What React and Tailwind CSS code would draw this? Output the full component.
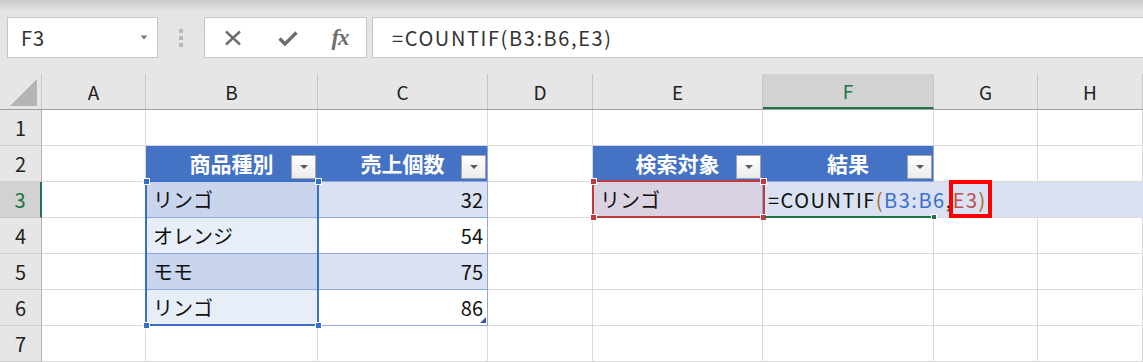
import React from 'react';

const cols = [
  { id: 'A', w: 'w-[104px]' },
  { id: 'B', w: 'w-[172px]' },
  { id: 'C', w: 'w-[170px]' },
  { id: 'D', w: 'w-[105px]' },
  { id: 'E', w: 'w-[170px]' },
  { id: 'F', w: 'w-[171px]' },
  { id: 'G', w: 'w-[104px]' },
  { id: 'H', w: 'w-[105px]' },
];

const GRID = 'border-r border-b border-[#d9d9d9]';
const TBL = 'border-r border-b border-[#8ea9db]';

function Cell({ w, bd = GRID, className = '', children }) {
  return (
    <div className={`${w} ${bd} h-full shrink-0 flex items-center ${className}`}>
      {children}
    </div>
  );
}

function RowHead({ n, active }) {
  return active ? (
    <div className="w-[42px] h-full shrink-0 flex items-center justify-center bg-[#d2d2d2] border-b border-b-[#c6c6c6] border-r-2 border-r-[#217346] text-[#217346]">
      {n}
    </div>
  ) : (
    <div className="w-[42px] h-full shrink-0 flex items-center justify-center bg-[#e6e6e6] border-b border-b-[#cfcfcf] border-r border-r-[#b3b3b3] text-[#222]">
      {n}
    </div>
  );
}

function Dropdown() {
  return (
    <div className="absolute right-[1px] bottom-[2px] w-[25px] h-[24px] border border-[#a3a3a3] bg-linear-to-b from-white to-[#ececec] flex items-center justify-center">
      <svg width="10" height="6" viewBox="0 0 10 6">
        <path d="M1 1h8L5 5z" fill="#5a5a5a" />
      </svg>
    </div>
  );
}

function TableHead({ w, bd, children }) {
  return (
    <Cell w={w} bd={bd} className="relative justify-center bg-[#4472c4] text-white font-bold text-[21px]">
      {children}
      <Dropdown />
    </Cell>
  );
}

function Handle({ className }) {
  return <div className={`absolute w-[7px] h-[7px] border border-white ${className}`} />;
}

export default function App() {
  const [A, B, C, D, E, F, G, H] = cols.map((c) => c.w);

  return (
    <div className="w-[1143px] h-[362px] overflow-hidden bg-[#e6e6e6] text-[20px] leading-none font-['Noto_Sans_CJK_JP','Noto_Sans',sans-serif] text-[#111]">
      {/* toolbar */}
      <div className="h-[74px] flex items-start pt-[17px] pl-[7px] overflow-hidden bg-[linear-gradient(#c9c9c9,#e4e4e4_12px,#e6e6e6)]">
        <div className="w-[151px] h-[41px] shrink-0 bg-white border border-[#c6c6c6] flex items-center justify-between pl-[13px] pr-[9px] text-[#333]">
          <span className="tracking-[1px]">F3</span>
          <svg width="8" height="5" viewBox="0 0 8 5">
            <path d="M0.5 0.5h7L4 4.5z" fill="#7a7a7a" />
          </svg>
        </div>
        <div className="w-[46px] h-[41px] shrink-0 flex flex-col items-center justify-center gap-[3px]">
          <div className="w-[4px] h-[4px] bg-[#b8b8b8]" />
          <div className="w-[4px] h-[4px] bg-[#b8b8b8]" />
          <div className="w-[4px] h-[4px] bg-[#b8b8b8]" />
        </div>
        <div className="w-[163px] h-[41px] shrink-0 bg-white border border-[#c6c6c6] flex items-center">
          <div className="w-[56px] flex justify-center">
            <svg width="18" height="16" viewBox="0 0 18 16">
              <path d="M2 1.5l14 13M16 1.5l-14 13" stroke="#6e6e6e" strokeWidth="2.4" />
            </svg>
          </div>
          <div className="w-[53px] flex justify-center">
            <svg width="20" height="16" viewBox="0 0 20 16">
              <path d="M1.5 8.5l5.5 5.5L18.5 2.5" stroke="#6e6e6e" strokeWidth="3.4" fill="none" />
            </svg>
          </div>
          <div className="w-[52px] flex justify-center">
            <span className="font-['Liberation_Serif',serif] italic font-bold text-[23px] text-[#6e6e6e] tracking-[-1px]">fx</span>
          </div>
        </div>
        <div className="ml-[5px] w-[800px] h-[41px] shrink-0 bg-white border border-[#c6c6c6] flex items-center pl-[19px] text-[#333] whitespace-nowrap tracking-[1.6px]">
          =COUNTIF(B3:B6,E3)
        </div>
      </div>

      {/* grid */}
      <div className="relative">
        {/* column headers */}
        <div className="flex h-[36px] border-b border-[#9f9f9f] bg-[#e6e6e6] text-[19px] text-[#222]">
          <div className="w-[42px] h-full shrink-0 border-r border-[#c6c6c6] flex items-end justify-end pr-[3px] pb-[3px]">
            <svg width="28" height="28" viewBox="0 0 28 28">
              <path d="M27 1v27H0z" fill="#b4b4b4" />
            </svg>
          </div>
          {cols.map((c) =>
            c.id === 'F' ? (
              <div key={c.id} className={`${c.w} h-full shrink-0 border-r border-r-[#c6c6c6] border-b-2 border-b-[#217346] bg-[#d2d2d2] flex items-center justify-center text-[#217346]`}>
                {c.id}
              </div>
            ) : (
              <div key={c.id} className={`${c.w} h-full shrink-0 border-r border-[#c6c6c6] flex items-center justify-center`}>
                {c.id}
              </div>
            )
          )}
        </div>

        {/* row 1 */}
        <div className="flex h-[36px] bg-white">
          <RowHead n="1" />
          <Cell w={A} /><Cell w={B} /><Cell w={C} /><Cell w={D} />
          <Cell w={E} /><Cell w={F} /><Cell w={G} /><Cell w={H} />
        </div>

        {/* row 2 */}
        <div className="flex h-[36px] bg-white">
          <RowHead n="2" />
          <Cell w={A} />
          <TableHead w={B} bd="border-r border-b border-r-[#4472c4] border-b-[#8ea9db]">商品種別</TableHead>
          <TableHead w={C} bd="border-r border-b border-[#8ea9db]">売上個数</TableHead>
          <Cell w={D} />
          <TableHead w={E} bd="border-r border-b border-r-[#4472c4] border-b-[#8ea9db]">検索対象</TableHead>
          <TableHead w={F} bd="border-r border-b border-[#8ea9db]">結果</TableHead>
          <Cell w={G} /><Cell w={H} />
        </div>

        {/* row 3 */}
        <div className="flex h-[36px] bg-white">
          <RowHead n="3" active />
          <Cell w={A} />
          <Cell w={B} bd={TBL} className="bg-[#c9d5ec] pl-[7px]">リンゴ</Cell>
          <Cell w={C} bd={TBL} className="bg-[#d9e1f2] justify-end pr-[4px]">32</Cell>
          <Cell w={D} />
          <Cell w={E} bd={TBL} className="bg-[#dad2e0] pl-[7px]">リンゴ</Cell>
          <Cell w={F} bd="border-b border-[#d9d9d9]" className="relative z-10 bg-[#d9e1f2] items-stretch">
            <div className="flex items-stretch pl-[5px] whitespace-nowrap tracking-[1.5px]">
              <span className="flex items-center">=COUNTIF</span>
              <span className="flex items-center text-[#a86a2a]">(</span>
              <span className="flex items-center text-[#3b6fd0]">B3:B6</span>
              <span className="flex items-center">,</span>
              <span className="relative flex items-center">
                <span className="text-[#c0504d]">E3</span>
                <span className="text-[#a86a2a]">)</span>
                <span className="absolute -left-[4px] -right-[5px] -top-[2px] -bottom-[1px] border-4 border-[#ff0000]" />
              </span>
            </div>
          </Cell>
          <Cell w={G} bd="border-b border-[#d9d9d9]" className="bg-[#d9e1f2]" />
          <Cell w={H} bd="border-b border-[#d9d9d9]" className="bg-[#d9e1f2]" />
        </div>

        {/* row 4 */}
        <div className="flex h-[36px] bg-white">
          <RowHead n="4" />
          <Cell w={A} />
          <Cell w={B} bd={TBL} className="bg-[#e8eef8] pl-[7px]">オレンジ</Cell>
          <Cell w={C} bd={TBL} className="justify-end pr-[4px]">54</Cell>
          <Cell w={D} /><Cell w={E} /><Cell w={F} /><Cell w={G} /><Cell w={H} />
        </div>

        {/* row 5 */}
        <div className="flex h-[36px] bg-white">
          <RowHead n="5" />
          <Cell w={A} />
          <Cell w={B} bd={TBL} className="bg-[#c9d5ec] pl-[7px]">モモ</Cell>
          <Cell w={C} bd={TBL} className="bg-[#d9e1f2] justify-end pr-[4px]">75</Cell>
          <Cell w={D} /><Cell w={E} /><Cell w={F} /><Cell w={G} /><Cell w={H} />
        </div>

        {/* row 6 */}
        <div className="flex h-[36px] bg-white">
          <RowHead n="6" />
          <Cell w={A} />
          <Cell w={B} bd={TBL} className="bg-[#e8eef8] pl-[7px]">リンゴ</Cell>
          <Cell w={C} bd={TBL} className="relative justify-end pr-[4px]">
            86
            <svg className="absolute right-[1px] bottom-[2px]" width="6" height="6" viewBox="0 0 6 6">
              <path d="M6 0v6H0z" fill="#3f51b5" />
            </svg>
          </Cell>
          <Cell w={D} /><Cell w={E} /><Cell w={F} /><Cell w={G} /><Cell w={H} />
        </div>

        {/* row 7 */}
        <div className="flex h-[36px] bg-white">
          <RowHead n="7" />
          <Cell w={A} /><Cell w={B} /><Cell w={C} /><Cell w={D} />
          <Cell w={E} /><Cell w={F} /><Cell w={G} /><Cell w={H} />
        </div>

        {/* selection B3:B6 */}
        <div className="absolute left-[145px] top-[106px] w-[174px] h-[146px] border-2 border-[#3a6fc8] z-20" />
        <Handle className="left-[143px] top-[104px] bg-[#3a6fc8] z-20" />
        <Handle className="left-[315px] top-[104px] bg-[#3a6fc8] z-20" />
        <Handle className="left-[143px] top-[248px] bg-[#3a6fc8] z-20" />
        <Handle className="left-[315px] top-[248px] bg-[#3a6fc8] z-20" />

        {/* E3 reference */}
        <div className="absolute left-[592px] top-[106px] w-[173px] h-[38px] border-2 border-[#c0393b] z-20" />
        <Handle className="left-[590px] top-[104px] bg-[#c0393b] z-20" />
        <Handle className="left-[760px] top-[104px] bg-[#c0393b] z-20" />
        <Handle className="left-[590px] top-[140px] bg-[#c0393b] z-20" />
        <Handle className="left-[760px] top-[140px] bg-[#c0393b] z-20" />

        {/* active cell F3 */}
        <div className="absolute left-[765px] top-[142px] w-[167px] h-[2px] bg-[#217346] z-20" />
        <div className="absolute left-[931px] top-[140px] w-[6px] h-[6px] bg-[#217346] border border-white z-20" />
      </div>
    </div>
  );
}
